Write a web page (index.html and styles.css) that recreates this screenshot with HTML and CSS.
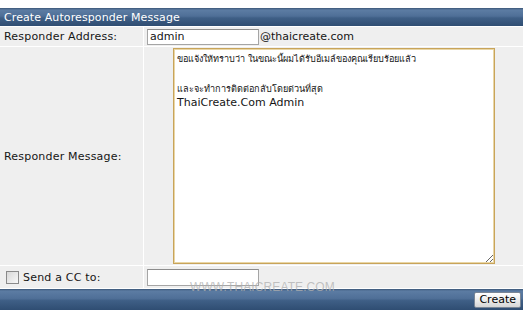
FILE: index.html
```html
<!DOCTYPE html>
<html lang="th">
<head>
<meta charset="utf-8">
<title>Create Autoresponder Message</title>
<link rel="stylesheet" href="styles.css">
</head>
<body>
<form class="panel">
  <div class="bar head">Create Autoresponder Message</div>
  <div class="label row1">Responder Address:</div>
  <div class="field row1"><input class="text" type="text" value="admin"><span class="domain">@thaicreate.com</span></div>
  <div class="label row2">Responder Message:</div>
  <div class="field row2 center">
    <div class="msg" contenteditable="true" role="textbox" aria-multiline="true">
      <div class="thai">ขอแจ้งให้ทราบว่า ในขณะนี้ผมได้รับอีเมล์ของคุณเรียบร้อยแล้ว</div>
      <div class="thai">&nbsp;</div>
      <div class="thai">และจะทำการติดต่อกลับโดยด่วนที่สุด</div>
      <div class="latin">ThaiCreate.Com Admin</div>
    </div>
  </div>
  <div class="label row3"><span class="check"></span>Send a CC to:</div>
  <div class="field row3"><input class="text cc" type="text" value=""></div>
  <div class="bar foot"><button class="btn" type="button">Create</button></div>
  <div class="watermark">WWW.THAICREATE.COM</div>
</form>
</body>
</html>
```
FILE: styles.css
```css
html, body {
  margin: 0;
  padding: 0;
  background: #ffffff;
}
body {
  font-family: "DejaVu Sans", Verdana, sans-serif;
  font-size: 11px;
  color: #151515;
}
.panel {
  position: relative;
  margin: 8px 0 0 0;
  width: 523px;
  display: grid;
  grid-template-columns: 143px 379px;
  grid-template-rows: 18px 19px 218px 22px 21px;
  gap: 1px;
  background: #ffffff;
}
.bar {
  grid-column: 1 / 3;
  background: linear-gradient(#3b5677 0, #5c7ca3 2px, #4f6f97 45%, #3f5f86 55%, #2f4d72 100%);
  color: #ffffff;
  display: flex;
  align-items: center;
}
.head {
  padding-left: 4px;
  letter-spacing: 0.1px;
}
.foot {
  justify-content: flex-end;
  padding-right: 2px;
}
.label, .field {
  background: #efefef;
  display: flex;
  align-items: center;
}
.label {
  padding-left: 4px;
  letter-spacing: 0.2px;
}
.field {
  padding-left: 3px;
}
.center {
  justify-content: center;
  padding-left: 1px;
}
.text {
  box-sizing: border-box;
  width: 112px;
  height: 16px;
  margin: 0;
  padding: 0 2px;
  border: 1px solid #a5a5a5;
  border-top-color: #8c8c8c;
  background: #fff;
  font-family: "DejaVu Sans", Verdana, sans-serif;
  font-size: 11px;
  color: #151515;
  outline: none;
}
.cc {
  height: 17px;
  margin-top: 1px;
}
.domain {
  margin-left: 1px;
}
.msg {
  box-sizing: border-box;
  width: 322px;
  height: 216px;
  margin: 0;
  padding: 3px 2px 2px 3px;
  border: 1px solid #c8a45a;
  box-shadow: inset 0 0 0 1px #e9d6a6;
  background: #fff;
  color: #151515;
  resize: both;
  overflow: hidden;
  outline: none;
}
.thai {
  font-size: 9.1px;
  line-height: 15px;
  height: 15px;
}
.latin {
  font-family: "DejaVu Sans", Verdana, sans-serif;
  font-size: 11px;
  line-height: 13px;
  margin-top: -1px;
}
.check {
  box-sizing: border-box;
  width: 13px;
  height: 13px;
  margin: 0 4px 0 2px;
  border: 1px solid #8a8a8a;
  background: linear-gradient(135deg, #d8d8d8, #f8f8f8);
}
.btn {
  box-sizing: border-box;
  height: 16px;
  padding: 0 4px;
  margin: 0;
  border: 1px solid #7a8696;
  border-radius: 2px;
  background: linear-gradient(#ffffff, #e8e8e8 60%, #d6d6d6);
  font-family: "DejaVu Sans", Verdana, sans-serif;
  font-size: 11px;
  color: #000;
}
.watermark {
  position: absolute;
  left: 190px;
  top: 272px;
  font-family: "Liberation Sans", Arial, sans-serif;
  font-size: 12px;
  letter-spacing: 0.1px;
  color: rgba(175, 175, 175, 0.75);
  pointer-events: none;
}
```
